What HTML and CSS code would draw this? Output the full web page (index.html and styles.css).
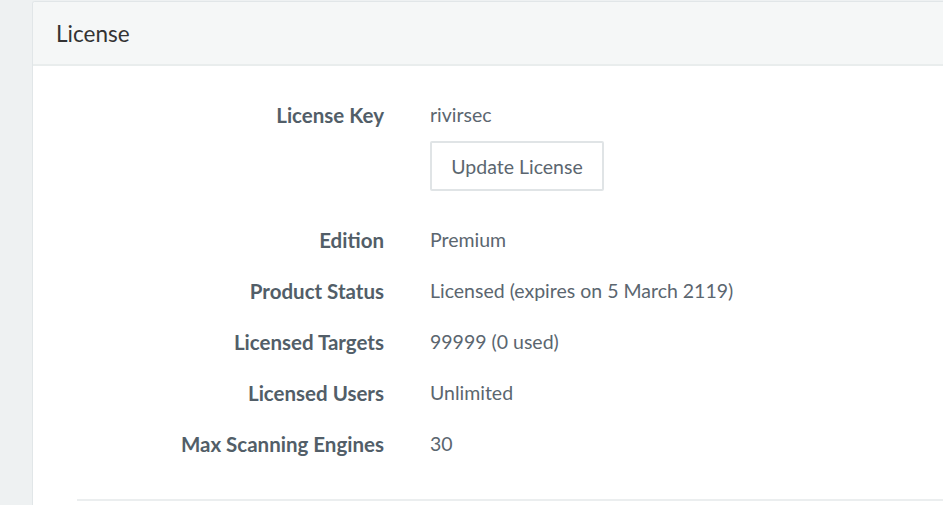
FILE: index.html
```html
<!DOCTYPE html>
<html>
<head>
<meta charset="utf-8">
<link rel="stylesheet" href="styles.css">
</head>
<body>
<div class="page">
  <div class="panel">
    <div class="panel-head">License</div>
    <div class="panel-body">
      <div class="row">
        <div class="label">License Key</div>
        <div class="value">
          <div>rivirsec</div>
          <button class="btn">Update License</button>
        </div>
      </div>
      <div class="row">
        <div class="label">Edition</div>
        <div class="value">Premium</div>
      </div>
      <div class="row">
        <div class="label">Product Status</div>
        <div class="value">Licensed (expires on 5 March 2119)</div>
      </div>
      <div class="row">
        <div class="label">Licensed Targets</div>
        <div class="value">99999 (0 used)</div>
      </div>
      <div class="row">
        <div class="label">Licensed Users</div>
        <div class="value">Unlimited</div>
      </div>
      <div class="row">
        <div class="label">Max Scanning Engines</div>
        <div class="value">30</div>
      </div>
      <div class="divider"></div>
    </div>
  </div>
</div>
</body>
</html>
```

FILE: styles.css
```css
html, body {
  margin: 0;
  padding: 0;
  background: #eef1f2;
  font-family: Lato, "Open Sans", sans-serif;
  overflow: hidden;
  height: 505px;
}
.page {
  padding: 1px 0 0 32px;
  width: 911px;
}
.panel {
  background: #fff;
  border: 1px solid #e1e6e8;
  border-right: 0;
  border-radius: 3px 0 0 0;
  height: 503px;
  overflow: hidden;
}
.panel-head {
  background: #f5f7f7;
  border-bottom: 2px solid #e9eded;
  height: 62px;
  box-sizing: content-box;
  padding: 0 0 0 23px;
  display: flex;
  align-items: center;
  font-size: 22.5px;
  color: #333;
}
.panel-body {
  padding: 36px 0 0 45px;
}
.row {
  display: flex;
  align-items: flex-start;
  min-height: 51px;
}
.label {
  width: 352px;
  flex: none;
  text-align: right;
  font-weight: 700;
  font-size: 20.5px;
  color: #525e68;
  line-height: 26px;
  padding-right: 46px;
  box-sizing: border-box;
}
.value {
  font-size: 19.5px;
  color: #5b666f;
  line-height: 26px;
}
.btn {
  margin: 13px 0 36px;
  display: block;
  height: 50px;
  width: 174px;
  background: #fff;
  border: 2px solid #e0e4e6;
  border-radius: 2px;
  font-family: inherit;
  font-size: 19.5px;
  color: #5b666f;
  padding: 0;
}
.divider {
  height: 2px;
  background: #ebeeef;
  margin-top: 17px;
  margin-left: -1px;
}
```
